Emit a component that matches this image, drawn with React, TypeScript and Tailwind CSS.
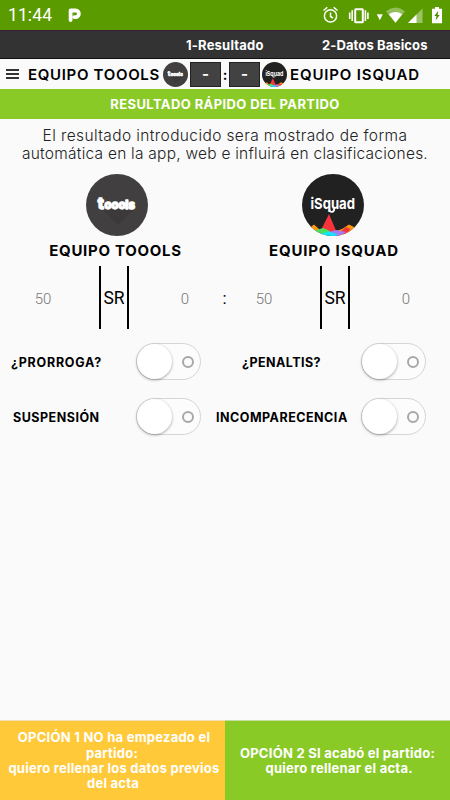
import React from 'react';

const TooolsLogo = ({ className }: { className: string }) => (
  <svg viewBox="0 0 62 62" className={className}>
    <circle cx="31" cy="31" r="31" fill="#413f40" />
    <path d="M16 35L32 51L49 35Z" fill="#383637" opacity="0.6" />
    <g fill="#fff" stroke="#fff" strokeWidth="1.4" strokeLinejoin="round" fontWeight="800" fontFamily="Inter, sans-serif">
      <text y="34.5">
        <tspan x="11.8" fontSize="16">t</tspan>
        <tspan x="18.5" fontSize="11.5" textLength="30.5" lengthAdjust="spacingAndGlyphs">oools</tspan>
      </text>
    </g>
  </svg>
);

const ISquadLogo = ({ className }: { className: string }) => (
  <svg viewBox="0 0 62 62" className={className}>
    <clipPath id="disc"><circle cx="31" cy="31" r="31" /></clipPath>
    <g clipPath="url(#disc)">
      <rect width="62" height="62" fill="#222122" />
      <path d="M5 56l7-5.5 6 5.5-3 6H5zM34 57l6-2 7-4.5 6 3 3 4-8 5H36z" fill="#ff9811" />
      <path d="M18 58l9-18 8 19zM37 59l7-6 4.5 2-5 6z" fill="#f5343b" />
      <path d="M11 57l10-3 5 2 4 3-7 3H12z" fill="#4cde62" />
      <path d="M27 58l7-2 10 2-6 4h-9z" fill="#a47af5" />
      <path d="M16 60.5l11-3 9 3-4 2H16z" fill="#12e6fa" />
      <text x="8.5" y="34.8" fontSize="15" fontWeight="700" fill="#fff" textLength="44.5" lengthAdjust="spacingAndGlyphs" fontFamily="Inter, sans-serif">iSquad</text>
      <path d="M27.5 35.5c0 3.4 4.8 3.4 4.8-1" stroke="#fff" strokeWidth="1.8" fill="none" />
    </g>
  </svg>
);

const StatusBar = () => (
  <div className="flex h-[30px] shrink-0 items-center bg-[#5a9b00] pl-2 text-white">
    <span className="w-[60px] font-[Roboto] text-[17.5px] leading-[31px] tracking-[0.1px]">11:44</span>
    <svg className="h-[30px] w-[14px]" viewBox="0 0 14 30">
      <path d="M2.6 20V10.5h5a3.2 3.2 0 0 1 0 6.6H6.4" fill="none" stroke="#fff" strokeWidth="3.8" strokeLinecap="round" strokeLinejoin="round" />
    </svg>
    <svg className="ml-auto h-[30px] w-[130px]" viewBox="320 0 130 30">
      <g fill="none" stroke="#fff" strokeWidth="1.5">
        <circle cx="330.5" cy="15.9" r="6.1" />
        <path d="M330.5 12.5v4l2.5 1.5M323.5 10.5l3.8-3.2M337.5 10.5l-3.8-3.2" />
        <path d="M349.7 12.5v6.5M352.2 10.3v10.6M365.4 10.3v10.6M367.9 12.5v6.5" strokeWidth="1.6" />
        <rect x="355.2" y="9.2" width="7.6" height="13" rx=".5" strokeWidth="2" />
      </g>
      <path d="M376.8 14.3h6l-3 6z" fill="#fff" />
      <path d="M386 11.3q9.5-7.4 19 0l-9.5 11.4z" fill="#fff" opacity=".35" />
      <path d="M388.7 14.3q6.8-4.6 13.6 0l-6.8 8.4z" fill="#fff" />
      <path d="M408 23l14.5-14.5v14.5z" fill="#fff" opacity=".4" />
      <path d="M408 23l8.5-8.5v8.5z" fill="#fff" />
      <path d="M432 8.7h3V7h4v1.7h3v14.6h-10z" fill="#fff" />
      <path d="M438.3 10.7l-4 5.4h2.2l-.8 4.2 4-5.4h-2.2z" fill="#4d8a00" />
    </svg>
  </div>
);

const Score = () => (
  <div className="flex h-[25px] w-[31px] items-center justify-center border border-[#222] bg-[#424242] text-[15px] font-bold text-white">-</div>
);

const Points = () => (
  <div className="flex h-[63px] items-center font-[Roboto]">
    <span className="w-[42px] pt-[3px] text-center text-[15px] font-light text-[#777]">50</span>
    <div className="ml-[35px] flex h-[63px] w-[30px] items-center justify-center border-x-2 border-black pt-px text-[17.5px]">SR</div>
    <span className="ml-[35px] w-[42px] pt-[3px] text-center text-[15px] font-light text-[#777]">0</span>
  </div>
);

const Toggle = () => (
  <div className="flex h-[37px] w-[65px] items-center justify-between rounded-full border-[1.5px] border-[#d5d5d5] bg-[#fcfcfc] pr-[6px]">
    <div className="size-[35px] rounded-full bg-white shadow-[0_1px_3px_rgba(0,0,0,0.35)]" />
    <div className="size-[12px] rounded-full border-2 border-[#a8a8a8]" />
  </div>
);

export default function App() {
  return (
    <div className="flex h-[800px] w-[450px] flex-col overflow-hidden bg-[#fafafa] font-[Inter,sans-serif] text-black">
      <StatusBar />

      {/* Tabs */}
      <div className="flex h-[29px] shrink-0 items-center border-t border-b border-t-[#391e36] border-b-[#111] bg-[#333] pt-[2px] text-[13px] font-bold text-white">
        <span className="ml-[186px] w-[136px] whitespace-nowrap tracking-[0.2px]">1-Resultado</span>
        <span className="whitespace-nowrap tracking-[0.1px]">2-Datos Basicos</span>
      </div>

      {/* Scoreboard */}
      <div className="flex h-[30px] shrink-0 items-center">
        <div className="ml-[6px] flex w-[22px] flex-col gap-[2px]">
          <div className="h-[2px] w-[13px] bg-[#333]" />
          <div className="h-[2px] w-[13px] bg-[#333]" />
          <div className="h-[2px] w-[13px] bg-[#333]" />
        </div>
        <span className="w-[135px] pt-[2px] text-[15px] font-semibold tracking-[0.68px] whitespace-nowrap">EQUIPO TOOOLS</span>
        <TooolsLogo className="mr-[2px] size-[25px]" />
        <Score />
        <span className="w-[8px] text-center text-[14px] font-bold">:</span>
        <Score />
        <ISquadLogo className="ml-[2px] size-[25px]" />
        <span className="ml-[3px] pt-[2px] text-[15px] font-semibold tracking-[0.85px] whitespace-nowrap">EQUIPO ISQUAD</span>
      </div>

      <div className="h-[30px] shrink-0 bg-[#8aca27] text-center text-[13px] font-bold leading-[31px] tracking-[0.4px] text-white">RESULTADO RÁPIDO DEL PARTIDO</div>

      <p className="mt-[8px] text-center text-[15.5px] font-light leading-[18px] text-[#222]">
        <span className="tracking-[0.39px]">El resultado introducido sera mostrado de forma</span>
        <br />
        <span className="tracking-[0.24px]">automática en la app, web e influirá en clasificaciones.</span>
      </p>

      {/* Teams */}
      <div className="mt-[11px] grid grid-cols-[231px_206px] justify-items-center text-[15px] font-bold leading-[20px] whitespace-nowrap">
        <TooolsLogo className="ml-[3px] size-[62px]" />
        <ISquadLogo className="ml-[-2px] size-[62px]" />
        <span className="mt-[5px] tracking-[0.72px]">EQUIPO TOOOLS</span>
        <span className="mt-[5px] tracking-[0.83px]">EQUIPO ISQUAD</span>
      </div>
      <div className="mt-[5px] flex items-center pl-[22px]">
        <Points />
        <span className="w-[37px] pt-[2px] text-center font-[Roboto] text-[17px]">:</span>
        <Points />
      </div>

      {/* Match flags */}
      <div className="mt-[14px] grid grid-cols-[136px_79px_146px_65px] items-center gap-y-[18px] text-[12.5px] font-bold whitespace-nowrap">
        <span className="pt-[3px] pl-[11px] tracking-[0.75px]">¿PRORROGA?</span>
        <Toggle />
        <span className="pt-[3px] pl-[27px] tracking-[0.45px]">¿PENALTIS?</span>
        <Toggle />
        <span className="pt-[3px] pl-[13px] tracking-[0.5px]">SUSPENSIÓN</span>
        <Toggle />
        <span className="pt-[3px] pl-px tracking-[0.5px]">INCOMPARECENCIA</span>
        <Toggle />
      </div>

      {/* Actions */}
      <div className="mt-auto grid h-[80px] shrink-0 grid-cols-2 text-center text-[13px] font-bold leading-[15.4px] tracking-[0.25px] whitespace-nowrap text-white">
        <button className="border-t border-[#f3dfb5] bg-[#ffc93a] pt-px pl-[3px]">
          OPCIÓN 1 NO ha empezado el<br /><span className="pr-[4px]">partido:</span><br />quiero rellenar los datos previos<br /><span className="pr-[2px]">del acta</span>
        </button>
        <button className="border-t border-[#c4dfa0] bg-[#8aca27] pt-px">
          OPCIÓN 2 SI acabó el partido:<br />&nbsp;quiero rellenar el acta.
        </button>
      </div>
    </div>
  );
}
